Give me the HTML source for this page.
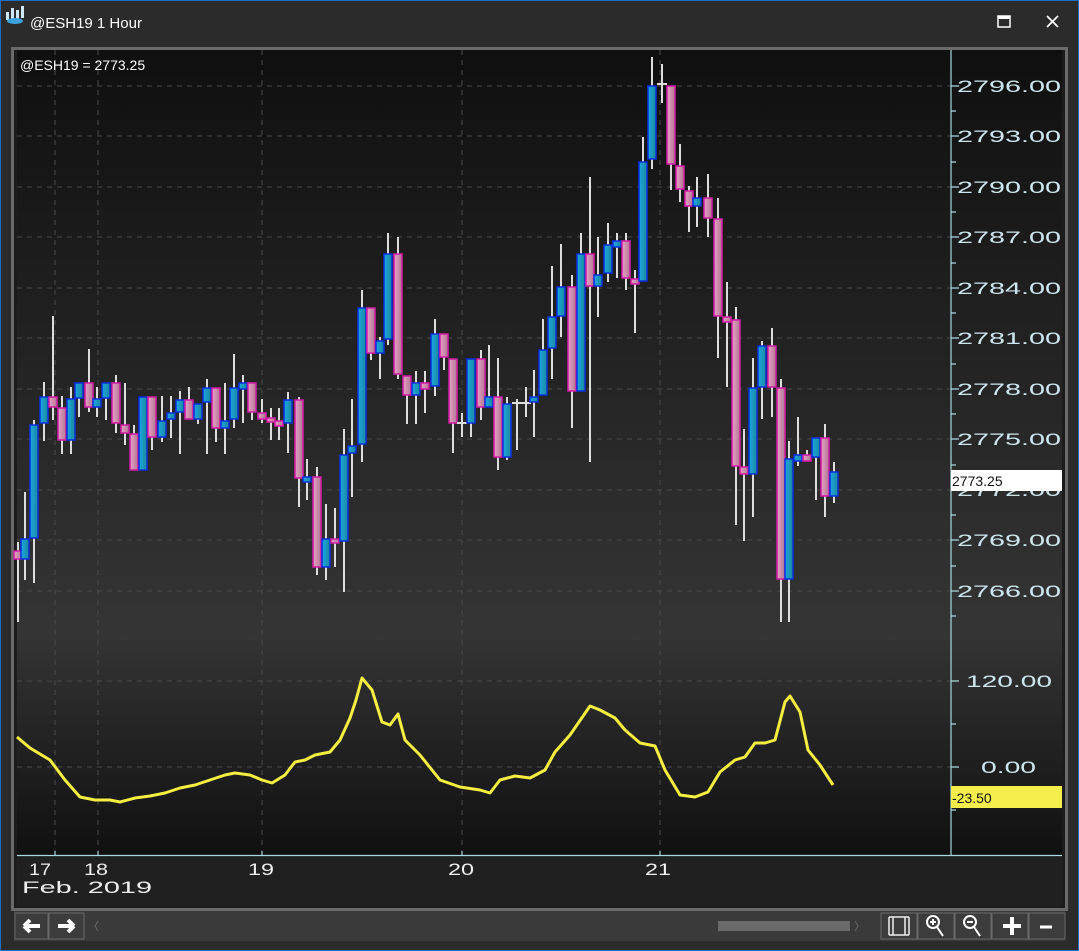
<!DOCTYPE html>
<html><head><meta charset="utf-8"><style>
body{margin:0;background:#2b2b2b;width:1079px;height:951px;overflow:hidden;font-family:"Liberation Sans",sans-serif}
#win{position:absolute;left:0;top:0;width:1077px;height:949px;border:1px solid #1a6fc0;background:#2b2b2b}
</style></head><body>
<div id="win"></div>
<svg width="1079" height="951" style="position:absolute;left:0;top:0" font-family="Liberation Sans, sans-serif">
<defs>
<linearGradient id="bg1" x1="0" y1="0" x2="0" y2="1"><stop offset="0" stop-color="#0f0f0f"/><stop offset="1" stop-color="#353535"/></linearGradient>
<linearGradient id="bg2" x1="0" y1="0" x2="0" y2="1"><stop offset="0" stop-color="#333"/><stop offset="1" stop-color="#101010"/></linearGradient>
<linearGradient id="gb" x1="0" y1="0" x2="1" y2="0"><stop offset="0" stop-color="#1aa6e6"/><stop offset="1" stop-color="#1a8a9a"/></linearGradient>
<linearGradient id="gp" x1="0" y1="0" x2="1" y2="0"><stop offset="0" stop-color="#e8a0c8"/><stop offset="1" stop-color="#b07890"/></linearGradient>
</defs>
<g fill="#cfe8f8"><rect x="6" y="12" width="3" height="8"/><rect x="11" y="8" width="3" height="12"/><rect x="16" y="10" width="3" height="10"/><rect x="21" y="6" width="3" height="12"/></g>
<ellipse cx="15" cy="21" rx="8" ry="3" fill="#3aa0e0"/>
<text x="30" y="28" fill="#fff" font-size="15">@ESH19 1 Hour</text>
<rect x="998" y="16" width="12" height="11" fill="none" stroke="#fff" stroke-width="1.5"/><rect x="998" y="16" width="12" height="3" fill="#fff"/>
<path d="M1047 16 L1058 27 M1058 16 L1047 27" stroke="#fff" stroke-width="1.8"/>
<rect x="11" y="47" width="1057" height="864" fill="#6a6a6a"/>
<rect x="14" y="50" width="1051" height="858" fill="#1c1c1c"/>
<rect x="17" y="50" width="934" height="590" fill="url(#bg1)"/>
<rect x="17" y="640" width="934" height="215" fill="url(#bg2)"/>
<rect x="951" y="50" width="111" height="590" fill="url(#bg1)"/>
<rect x="951" y="640" width="111" height="215" fill="url(#bg2)"/>
<rect x="17" y="856" width="1045" height="50" fill="#202020"/>
<g stroke="#4a4a4a" stroke-dasharray="5,5" stroke-width="1">
<path d="M17 86H951M17 136H951M17 187H951M17 237H951M17 288H951M17 338H951M17 389H951M17 439H951M17 490H951M17 540H951M17 591H951M17 681H951M17 767H951"/>
<path d="M55 50V855M98 50V855M262 50V855M462 50V855M660 50V855"/>
</g>
<g stroke="#a8d8e0" stroke-width="1.2">
<path d="M951 50V855M17 855.5H1062"/>
<path d="M951 86h8M951 111h5M951 136h8M951 162h5M951 187h8M951 212h5M951 237h8M951 263h5M951 288h8M951 313h5M951 338h8M951 364h5M951 389h8M951 414h5M951 439h8M951 465h5M951 490h8M951 515h5M951 540h8M951 566h5M951 591h8M951 616h5M951 681h8M951 724h5M951 767h8M951 810h5"/>
<path d="M55 855v-4M98 855v-4M262 855v-4M462 855v-4M660 855v-4"/>
</g>
<g fill="#cde6ee" font-size="17" lengthAdjust="spacingAndGlyphs">
<text x="957" y="92" textLength="104" lengthAdjust="spacingAndGlyphs">2796.00</text><text x="957" y="142" textLength="104" lengthAdjust="spacingAndGlyphs">2793.00</text><text x="957" y="193" textLength="104" lengthAdjust="spacingAndGlyphs">2790.00</text><text x="957" y="243" textLength="104" lengthAdjust="spacingAndGlyphs">2787.00</text><text x="957" y="294" textLength="104" lengthAdjust="spacingAndGlyphs">2784.00</text><text x="957" y="344" textLength="104" lengthAdjust="spacingAndGlyphs">2781.00</text><text x="957" y="395" textLength="104" lengthAdjust="spacingAndGlyphs">2778.00</text><text x="957" y="445" textLength="104" lengthAdjust="spacingAndGlyphs">2775.00</text><text x="957" y="496" textLength="104" lengthAdjust="spacingAndGlyphs">2772.00</text><text x="957" y="546" textLength="104" lengthAdjust="spacingAndGlyphs">2769.00</text><text x="957" y="597" textLength="104" lengthAdjust="spacingAndGlyphs">2766.00</text>
<text x="966" y="687" textLength="86" lengthAdjust="spacingAndGlyphs">120.00</text><text x="981" y="773" textLength="55" lengthAdjust="spacingAndGlyphs">0.00</text>
</g>
<rect x="951" y="470" width="111" height="21" fill="#fff"/><text x="952" y="486" font-size="14" fill="#111">2773.25</text>
<rect x="951" y="786" width="111" height="22" fill="#f4ee4c"/><text x="952" y="803" font-size="14" fill="#111">-23.50</text>
<g fill="#eee" font-size="17">
<text x="29" y="875" textLength="22" lengthAdjust="spacingAndGlyphs">17</text><text x="84" y="875" textLength="24" lengthAdjust="spacingAndGlyphs">18</text><text x="248" y="875" textLength="26" lengthAdjust="spacingAndGlyphs">19</text><text x="448" y="875" textLength="26" lengthAdjust="spacingAndGlyphs">20</text><text x="645" y="875" textLength="26" lengthAdjust="spacingAndGlyphs">21</text><text x="22" y="893" textLength="130" lengthAdjust="spacingAndGlyphs">Feb. 2019</text>
</g>
<text x="20" y="70" fill="#fff" font-size="14">@ESH19 = 2773.25</text>
<g id="c"></g>
<polyline fill="none" stroke="#f4ee40" stroke-width="3" stroke-linejoin="round" points="17,737 30,748 50,760 65,780 80,797 95,800 110,800 120,802 135,798 150,796 165,793 180,788 195,785 210,780 225,775 235,773 250,775 262,780 272,783 285,775 295,762 305,760 315,755 330,752 340,740 350,718 356,700 362,678 372,690 382,722 390,725 398,714 405,740 420,755 440,780 460,787 480,790 490,793 500,780 515,776 530,778 545,770 555,752 570,735 590,706 600,710 615,718 625,730 640,743 655,746 665,770 680,795 695,797 708,792 720,772 735,760 745,757 755,743 765,743 775,740 785,702 790,696 800,712 808,750 820,765 833,785"/>
<rect x="14" y="911" width="1051" height="30" fill="#3a3a3a"/>
<g fill="#3c3c3c" stroke="#6a6a6a"><rect x="15" y="913" width="33" height="26"/><rect x="49" y="913" width="35" height="26"/><rect x="881" y="913" width="36" height="26"/><rect x="918" y="913" width="36" height="26"/><rect x="955" y="913" width="36" height="26"/><rect x="992" y="913" width="36" height="26"/><rect x="1029" y="913" width="36" height="26"/></g>
<rect x="718" y="921" width="132" height="10" fill="#6a6a6a"/>
<path d="M98 921l-3 5 3 5M855 921l3 5-3 5" stroke="#666" fill="none"/>
<path d="M24 926h16M24 926l6-6M24 926l6 6M58 926h16M74 926l-6-6M74 926l-6 6" stroke="#fff" stroke-width="4" fill="none"/>
<path d="M889 917v18M909 917v18M893 917v18M905 917v18M889 917h20M889 935h20" stroke="#eee" stroke-width="1.5" fill="none"/>
<g stroke="#fff" fill="none" stroke-width="2"><circle cx="933" cy="922" r="6"/><path d="M937 927l6 9M930 922h6M933 919v6"/><circle cx="970" cy="922" r="6"/><path d="M974 927l6 9M967 922h6"/></g>
<path d="M1003 926h18M1012 917v18" stroke="#fff" stroke-width="4"/>
<path d="M1040 927h12" stroke="#fff" stroke-width="3"/>
</svg>
<script>
var d=[[18,551,559,542,622,'p'],[25,539,559,492,580,'b'],[34,425,538,420,583,'b'],[44,397,423,382,441,'b'],[53,397,407,316,420,'p'],[62,408,440,396,454,'p'],[71,399,440,387,454,'b'],[79,383,398,383,417,'b'],[89,383,407,349,412,'p'],[97,399,407,387,417,'b'],[106,383,398,383,420,'b'],[116,383,423,375,433,'p'],[125,425,433,383,445,'p'],[134,434,470,425,470,'p'],[143,397,470,397,470,'b'],[152,397,437,397,450,'p'],[162,421,437,396,442,'b'],[171,413,419,396,438,'b'],[180,400,412,391,454,'b'],[189,400,419,387,419,'p'],[198,404,419,404,424,'b'],[207,388,402,379,454,'b'],[216,388,428,388,442,'p'],[225,421,428,383,454,'b'],[234,388,419,354,428,'b'],[243,383,389,375,423,'b'],[252,383,412,383,420,'p'],[262,413,419,399,423,'p'],[271,418,422,408,440,'p'],[279,421,426,408,440,'p'],[288,400,423,392,453,'b'],[299,400,478,397,507,'p'],[307,477,482,459,500,'b'],[317,477,567,467,575,'p'],[326,539,567,504,580,'b'],[335,539,543,508,567,'p'],[344,455,541,429,592,'b'],[352,446,453,399,497,'b'],[362,308,444,290,462,'b'],[371,308,353,308,360,'p'],[380,341,353,337,379,'b'],[388,254,339,233,345,'b'],[398,254,374,237,379,'p'],[407,376,395,376,424,'p'],[416,383,395,371,424,'b'],[425,383,389,371,413,'p'],[435,334,386,319,396,'b'],[444,334,357,334,370,'p'],[453,359,423,359,453,'p'],[462,423,423,413,437,'d'],[471,359,423,359,437,'b'],[481,359,407,350,420,'p'],[489,397,407,345,407,'b'],[498,397,457,358,470,'p'],[507,404,457,397,460,'b'],[517,403,403,399,450,'d'],[526,403,403,387,417,'d'],[534,397,402,370,437,'b'],[543,350,395,319,395,'b'],[552,317,348,266,379,'b'],[561,287,316,244,337,'b'],[572,287,391,275,428,'p'],[581,254,391,233,391,'b'],[590,254,286,177,462,'p'],[598,275,286,237,317,'b'],[608,245,273,223,282,'b'],[617,241,247,233,278,'b'],[626,241,278,233,290,'p'],[635,279,284,270,333,'p'],[643,162,281,137,281,'b'],[652,86,159,57,169,'b'],[662,84,84,64,103,'d'],[671,86,164,86,190,'p'],[680,166,189,144,202,'p'],[689,191,206,186,232,'p'],[697,198,206,177,227,'b'],[708,198,218,174,237,'p'],[718,219,316,198,358,'p'],[727,317,322,282,387,'p'],[736,320,466,307,525,'p'],[744,467,474,429,541,'p'],[753,388,474,358,517,'b'],[762,346,387,341,419,'b'],[772,346,387,328,417,'p'],[781,388,579,379,622,'p'],[789,459,579,441,622,'b'],[798,455,461,417,466,'b'],[807,455,461,450,461,'p'],[816,438,457,438,500,'b'],[825,438,496,424,517,'p'],[834,472,496,462,503,'b']];
var s='';
d.forEach(function(c){var x=c[0];s+='<line x1="'+x+'" y1="'+c[3]+'" x2="'+x+'" y2="'+c[4]+'" stroke="#ddd" stroke-width="2"/>';
if(c[5]=='d'){s+='<line x1="'+(x-5)+'" y1="'+c[1]+'" x2="'+(x+5)+'" y2="'+c[1]+'" stroke="#ddd" stroke-width="2"/>';return;}
var h=Math.max(c[2]-c[1],4);var b=c[5]=='b';
s+='<rect x="'+(x-4)+'" y="'+c[1]+'" width="8" height="'+h+'" fill="url(#'+(b?'gb':'gp')+')" stroke="'+(b?'#0a2ee0':'#d41aa8')+'" stroke-width="1.5"/>';});
document.getElementById('c').innerHTML=s;
</script>
</body></html>
